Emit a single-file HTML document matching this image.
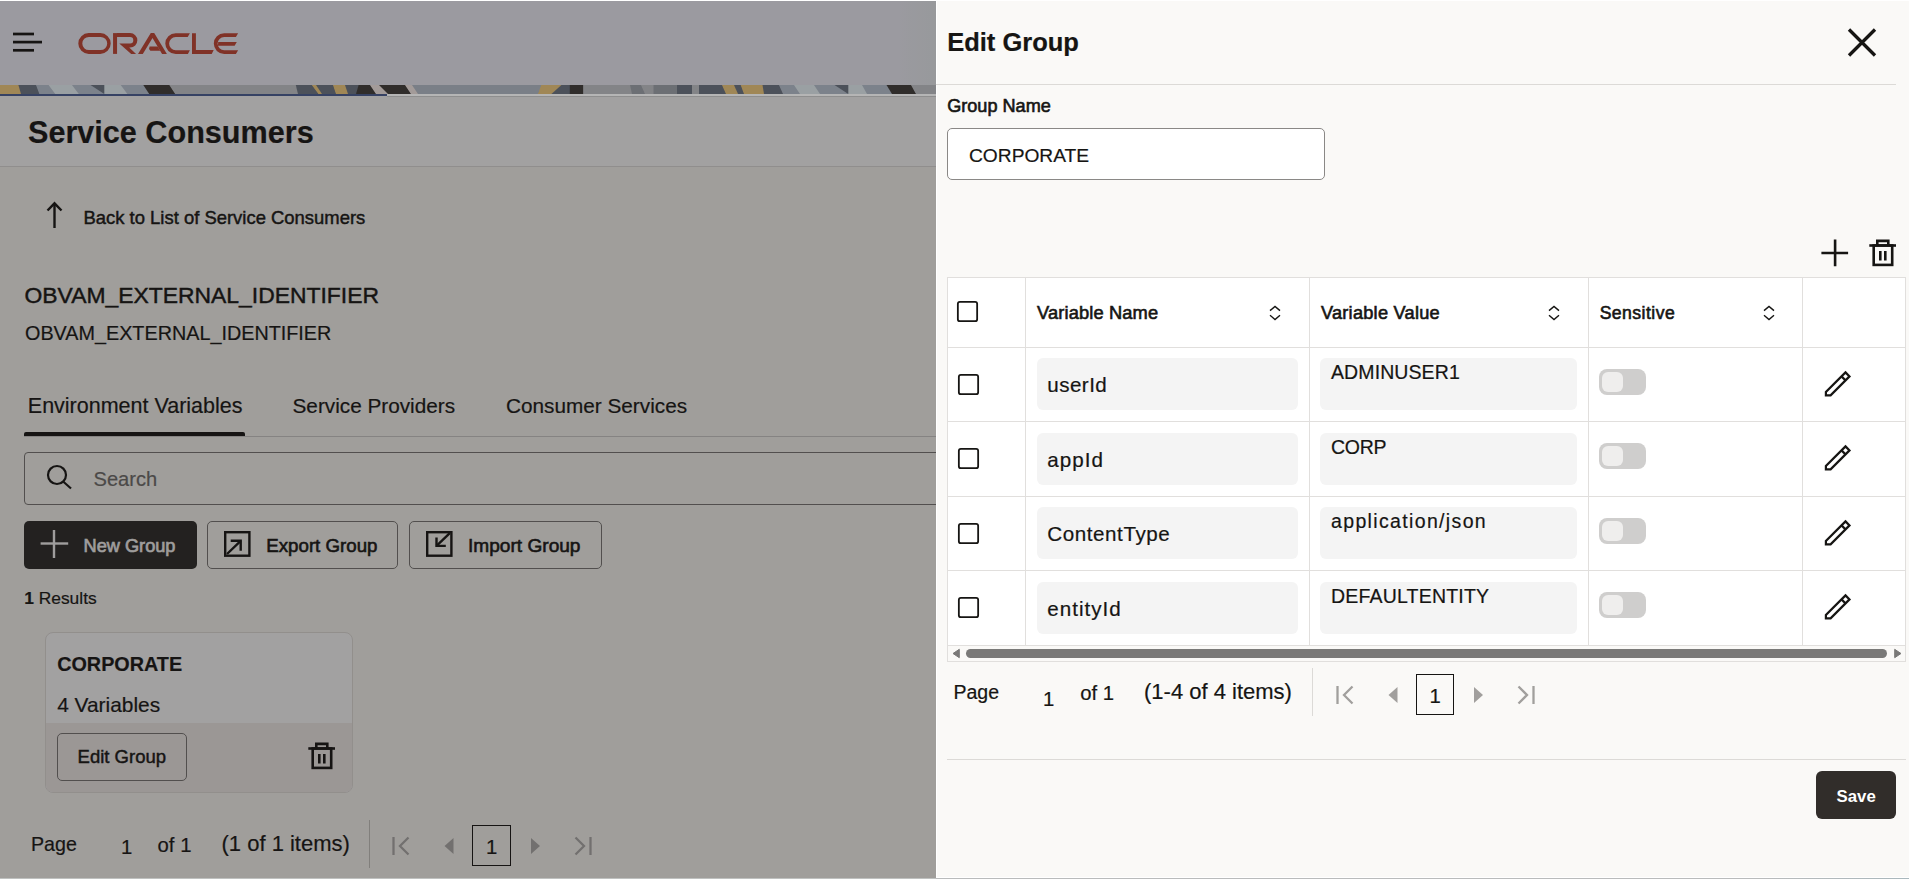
<!DOCTYPE html><html><head><meta charset="utf-8"><title>Edit Group</title><style>
*{margin:0;padding:0;box-sizing:border-box}
html,body{width:1909px;height:879px;overflow:hidden;background:#fff}
body{position:relative;font-family:"Liberation Sans",sans-serif;color:#161513}
.t{position:absolute;line-height:1;white-space:nowrap;-webkit-text-stroke:0.2px currentColor}
.r{position:absolute}
svg{position:absolute;overflow:visible}
.med{-webkit-text-stroke:0.45px currentColor}
.semi{-webkit-text-stroke:0.6px currentColor}
</style></head><body>
<div class="r" id="page" style="left:0;top:1px;width:936px;height:877px;background:#fcfbf6;overflow:hidden">
<div class="r" style="left:0px;top:0px;width:936px;height:84px;background:linear-gradient(to right,#f3f3fd 0%,#f3f3fd 96%,#eef2f6 100%)"></div>
<svg style="left:0;top:-1px" width="60" height="70"><g stroke="#161513" stroke-width="2.7" stroke-linecap="butt"><line x1="13" y1="34" x2="34" y2="34"/><line x1="13" y1="42.1" x2="42" y2="42.1"/><line x1="13" y1="50.3" x2="34" y2="50.3"/></g></svg>
<svg style="left:0;top:-1px" width="250" height="60" viewBox="0 0 250 60"><g fill="#c74634" fill-rule="evenodd">
<path d="M88.7 33.1H100.3A10.4 10.4 0 0 1 100.3 53.9H88.7A10.4 10.4 0 0 1 88.7 33.1ZM88.9 36.9H100.6A6.6 6.6 0 0 1 100.6 50.1H88.9A6.6 6.6 0 0 1 88.9 36.9Z"/>
<path d="M113.05 33.1H117.05V53.9H113.05Z"/>
<path d="M117 33.1H130.1A7.25 7.25 0 0 1 130.1 47.6H129.2L136.1 53.9H131.2L119.3 43.4H130.1A3.2 3.2 0 0 0 130.1 37.0H117Z"/>
<path d="M138 53.9L150.8 33.1H154.2L166.9 53.9H162.1L152.5 37.9L142.8 53.9Z"/>
<path d="M149.6 46.6H157.7L160.2 50.7H150.4Q148.2 48.6 149.6 46.6Z"/>
<path d="M175.7 33.2H189.9L187.7 37.0H175.7A6.6 6.6 0 0 0 175.7 50.2H189.9L187.9 54H175.7A10.4 10.4 0 0 1 175.7 33.2Z"/>
<path d="M192 33.2H195.9V50.1H213.7L211.7 54H192Z"/>
<path d="M224.2 33.2H238.1L235.9 37.0H224.2A6.6 6.6 0 0 0 224.2 50.2H238.1L235.9 54H224.2A10.4 10.4 0 0 1 224.2 33.2Z"/>
<path d="M218.2 42H236.8L234.6 45.8H217.9Z"/>
</g></svg>
<div class="r" style="left:0px;top:95px;width:936px;height:70px;background:#ffffff"></div>
<div class="r" style="left:0px;top:165px;width:936px;height:1px;background:#e2e0de"></div>
<div class="t" style="left:28px;top:116.10px;font-size:30.6px;font-weight:700;color:#161513;">Service Consumers</div>
<svg style="left:40px;top:194.3px" width="30" height="40"><g fill="none" stroke="#161513" stroke-width="2.4"><path d="M14.5 8.5V33"/><path d="M7.5 15.5L14.5 8.3L21.5 15.5"/></g></svg>
<div class="t med" style="left:83.5px;top:207.78px;font-size:18.45px;color:#161513;">Back to List of Service Consumers</div>
<div class="t med" style="left:24.5px;top:282.52px;font-size:22.9px;color:#161513;">OBVAM_EXTERNAL_IDENTIFIER</div>
<div class="t" style="left:25px;top:323.44px;font-size:19.8px;color:#161513;">OBVAM_EXTERNAL_IDENTIFIER</div>
<div class="t" style="left:27.8px;top:394.60px;font-size:21.5px;color:#161513;">Environment Variables</div>
<div class="t" style="left:292.5px;top:395.24px;font-size:20.75px;color:#161513;">Service Providers</div>
<div class="t" style="left:506px;top:395.24px;font-size:20.75px;color:#161513;">Consumer Services</div>
<div class="r" style="left:24px;top:435px;width:912px;height:1px;background:#cfcdcb"></div>
<div class="r" style="left:24px;top:431px;width:221px;height:4px;background:#161513;border-radius:2px 2px 0 0"></div>
<div class="r" style="left:24px;top:451px;width:1000px;height:53px;border:1px solid #7a7775;border-radius:4px;background:#fcfbf6"></div>
<svg style="left:40px;top:459px" width="40" height="40"><g fill="none" stroke="#161513" stroke-width="2.2"><circle cx="17" cy="15" r="9"/><path d="M23.4 21.7L31 28.5"/></g></svg>
<div class="t" style="left:93.5px;top:467.99px;font-size:20.1px;color:#6f6d6b;">Search</div>
<div class="r" style="left:24px;top:520px;width:173px;height:48px;background:#2c2b29;border-radius:5px"></div>
<svg style="left:40px;top:528px" width="30" height="30"><g stroke="#fbf9f8" stroke-width="2.4"><path d="M14 1V29"/><path d="M0.6 14.5H28.2"/></g></svg>
<div class="t semi" style="left:83.5px;top:536.09px;font-size:18.2px;color:#fbf9f8;">New Group</div>
<div class="r" style="left:207px;top:520px;width:191px;height:48px;border:1px solid #7a7775;border-radius:5px"></div>
<svg style="left:222px;top:528px" width="32" height="32"><g fill="none" stroke="#161513" stroke-width="2.4"><rect x="3.2" y="3.2" width="24.2" height="23.5"/><path d="M5 25L18.7 11.8"/><path d="M8.7 11.8H18.7V21.7"/></g></svg>
<div class="t semi" style="left:266.3px;top:535.67px;font-size:18.7px;color:#161513;">Export Group</div>
<div class="r" style="left:409px;top:520px;width:193px;height:48px;border:1px solid #7a7775;border-radius:5px"></div>
<svg style="left:424px;top:528px" width="32" height="32"><g fill="none" stroke="#161513" stroke-width="2.4"><rect x="3.2" y="3.2" width="24.2" height="23.5"/><path d="M25.8 4.1L12.5 16.9"/><path d="M12.5 8.6V16.9H21.8"/></g></svg>
<div class="t semi" style="left:468px;top:535.33px;font-size:19.1px;color:#161513;">Import Group</div>
<div class="t" style="left:24.2px;top:589.47px;font-size:17.4px;color:#161513;"><b>1</b> Results</div>
<div class="r" style="left:45px;top:631px;width:308px;height:161px;border:1px solid #e4e1dd;border-radius:8px;background:#ffffff;overflow:hidden"></div>
<div class="r" style="left:46px;top:722px;width:306px;height:69px;background:#f3eeec;border-radius:0 0 7px 7px"></div>
<div class="t" style="left:57.2px;top:654.44px;font-size:19.8px;font-weight:700;color:#161513;">CORPORATE</div>
<div class="t" style="left:57.2px;top:693.51px;font-size:20.9px;color:#161513;">4 Variables</div>
<div class="r" style="left:57px;top:732px;width:130px;height:48px;border:1px solid #7a7775;border-radius:5px"></div>
<div class="t med" style="left:77.6px;top:746.74px;font-size:18.5px;color:#161513;">Edit Group</div>
<svg style="left:301.3px;top:735.3px" width="44" height="40"><g fill="none" stroke="#161513" stroke-width="2.6"><path d="M7.3 12.5H34"/><rect x="11.7" y="12.5" width="18.5" height="19.4"/><path d="M15.3 12.5V7.9H26.3V12.5"/><path d="M18.3 18V27.6M23.3 18V27.6"/></g></svg>
<div class="t" style="left:31px;top:834.17px;font-size:19.65px;color:#161513;">Page</div>
<div class="t" style="left:121px;top:836.12px;font-size:20.3px;color:#161513;">1</div>
<div class="t" style="left:157.6px;top:833.62px;font-size:20.3px;color:#161513;">of 1</div>
<div class="t" style="left:221.5px;top:832.18px;font-size:22.0px;color:#161513;">(1 of 1 items)</div>
<div class="r" style="left:369px;top:819px;width:1px;height:48px;background:#c9c6c2"></div>
<div class="r" style="left:472px;top:824px;width:39px;height:41px;border:1.4px solid #161513"></div>
<div class="t" style="left:486px;top:836.12px;font-size:20.3px;color:#161513;">1</div>
<svg style="left:391.5px;top:833px" width="22" height="24"><g fill="none" stroke="#b0aeac" stroke-width="2.3"><path d="M1.5 3V21"/><path d="M16.5 3.5L8 12L16.5 20.5"/></g></svg>
<svg style="left:444px;top:833px" width="14" height="24"><path d="M0.5 12L9.5 4V20Z" fill="#b0aeac"/></svg>
<svg style="left:530.5px;top:833px" width="14" height="24"><path d="M9 12L0 4V20Z" fill="#b0aeac"/></svg>
<svg style="left:574.5px;top:833px" width="22" height="24"><g fill="none" stroke="#b0aeac" stroke-width="2.3"><path d="M15.5 3V21"/><path d="M0.5 3.5L9 12L0.5 20.5"/></g></svg>
</div>
<div class="r" style="left:0px;top:1px;width:936px;height:877px;background:rgba(22,21,19,0.4)"></div>
<svg style="left:0;top:85px" width="936" height="9" viewBox="0 0 936 9"><polygon points="0,0 19.0,0 21.6,9 0,9" fill="#a08756"/><polygon points="18.4,0 36.6,0 40.0,9 21,9" fill="#4c515a"/><polygon points="36,0 49.2,0 55.9,9 39.4,9" fill="#7c828b"/><polygon points="48.6,0 72.6,0 79.39999999999999,9 55.3,9" fill="#9aa0a3"/><polygon points="72,0 104.6,0 104.6,9 78.8,9" fill="#7c828b"/><polygon points="104,0 121.3,0 128.0,9 104,9" fill="#9aa0a3"/><polygon points="120.7,0 143.9,0 149.79999999999998,9 127.4,9" fill="#7c828b"/><polygon points="143.3,0 169.9,0 175.79999999999998,9 149.2,9" fill="#302d2b"/><polygon points="169.3,0 296.40000000000003,0 298.6,9 175.2,9" fill="#838487"/><polygon points="295.8,0 312.40000000000003,0 319.1,9 298,9" fill="#4c515a"/><polygon points="311.8,0 316.6,0 322.6,9 318.5,9" fill="#a08756"/><polygon points="316,0 333.6,0 336.6,9 322,9" fill="#4c515a"/><polygon points="333,0 345.6,0 348.6,9 336,9" fill="#a08756"/><polygon points="345,0 359.20000000000005,0 356.6,9 348,9" fill="#4c515a"/><polygon points="358.6,0 370.6,0 376.6,9 356,9" fill="#302d2b"/><polygon points="370,0 379.6,0 388.6,9 376,9" fill="#a39b99"/><polygon points="379,0 405.6,0 411.6,9 388,9" fill="#302d2b"/><polygon points="405,0 412.6,0 418.6,9 411,9" fill="#a39b99"/><polygon points="412,0 541.9,0 538.6,9 418,9" fill="#7a7f87"/><polygon points="541.3,0 562.0,0 552.0,9 538,9" fill="#a08756"/><polygon points="561.4,0 570.4,0 570.4,9 551.4,9" fill="#4c515a"/><polygon points="569.8,0 583.8000000000001,0 583.8000000000001,9 569.8,9" fill="#302d2b"/><polygon points="583.2,0 630.6,0 632.6,9 583.2,9" fill="#838487"/><polygon points="630,0 641.6,0 645.6,9 632,9" fill="#6c6f74"/><polygon points="641,0 654.1,0 654.1,9 645,9" fill="#838487"/><polygon points="653.5,0 677.6,0 677.6,9 653.5,9" fill="#6c6f74"/><polygon points="677,0 692.6,0 692.6,9 677,9" fill="#4c515a"/><polygon points="692,0 699.6,0 699.6,9 692,9" fill="#838487"/><polygon points="699,0 722.6,0 726.6,9 699,9" fill="#4c515a"/><polygon points="722,0 734.6,0 738.6,9 726,9" fill="#a08756"/><polygon points="734,0 741.3000000000001,0 744.6,9 738,9" fill="#4c515a"/><polygon points="740.7,0 763.1,0 764.6,9 744,9" fill="#a08756"/><polygon points="762.5,0 779.6,0 783.6,9 764,9" fill="#4c515a"/><polygon points="779,0 794.6,0 800.6,9 783,9" fill="#7c828b"/><polygon points="794,0 814.6,0 820.6,9 800,9" fill="#9aa0a3"/><polygon points="814,0 848.6,0 848.6,9 820,9" fill="#7c828b"/><polygon points="848,0 862.6,0 867.6,9 848,9" fill="#9aa0a3"/><polygon points="862,0 887.1,0 892.6,9 867,9" fill="#7c828b"/><polygon points="886.5,0 911.6,0 916.6,9 892,9" fill="#302d2b"/><polygon points="911,0 936.6,0 936.6,9 916,9" fill="#838487"/><polygon points="90.5,0 104.3,0 104.3,9" fill="#4c515a"/><polygon points="834.5,0 848.3,0 848.3,9" fill="#4c515a"/></svg>
<div class="r" style="left:0px;top:94px;width:387px;height:2px;background:#364264"></div>
<div class="r" style="left:387px;top:94px;width:549px;height:2px;background:#b5b5b5"></div>
<div class="r" style="left:387px;top:96px;width:549px;height:1px;background:#8e8e8e"></div>
<div class="r" style="left:936px;top:1px;width:973px;height:876px;background:#faf9f7;border-left:1px solid #fff"></div>
<div class="t" style="left:947.2px;top:30.11px;font-size:25.5px;font-weight:700;color:#161513;">Edit Group</div>
<svg style="left:1840px;top:20px" width="44" height="44"><g stroke="#161513" stroke-width="3.3"><path d="M9 9.5L35 35.5M35 9.5L9 35.5"/></g></svg>
<div class="r" style="left:936px;top:84px;width:960px;height:1px;background:#dcdad7"></div>
<div class="t semi" style="left:947.2px;top:96.68px;font-size:18.1px;color:#161513;">Group Name</div>
<div class="r" style="left:947px;top:128px;width:378px;height:52px;background:#fff;border:1px solid #8a8886;border-radius:5px"></div>
<div class="t" style="left:969px;top:146.05px;font-size:19.2px;color:#161513;">CORPORATE</div>
<svg style="left:1815px;top:233px" width="40" height="40"><g stroke="#161513" stroke-width="2.6"><path d="M20.1 6.6V33.2M6.4 20H33.1"/></g></svg>
<svg style="left:1862px;top:233px" width="44" height="40"><g fill="none" stroke="#161513" stroke-width="2.6"><path d="M7.3 12.5H34"/><rect x="11.7" y="12.5" width="18.5" height="19.4"/><path d="M15.3 12.5V7.9H26.3V12.5"/><path d="M18.3 18V27.6M23.3 18V27.6"/></g></svg>
<div class="r" style="left:947px;top:277px;width:959px;height:385px;background:#fff;border:1px solid #e1dfdd"></div>
<div class="r" style="left:948px;top:646px;width:957px;height:15px;background:#faf9f7"></div>
<div class="r" style="left:1025px;top:278px;width:1px;height:367px;background:#e1dfdd"></div>
<div class="r" style="left:1309px;top:278px;width:1px;height:367px;background:#e1dfdd"></div>
<div class="r" style="left:1588px;top:278px;width:1px;height:367px;background:#e1dfdd"></div>
<div class="r" style="left:1802px;top:278px;width:1px;height:367px;background:#e1dfdd"></div>
<div class="r" style="left:947px;top:347px;width:959px;height:1px;background:#e1dfdd"></div>
<div class="r" style="left:947px;top:421px;width:959px;height:1px;background:#e1dfdd"></div>
<div class="r" style="left:947px;top:496px;width:959px;height:1px;background:#e1dfdd"></div>
<div class="r" style="left:947px;top:570px;width:959px;height:1px;background:#e1dfdd"></div>
<div class="r" style="left:947px;top:645px;width:959px;height:1px;background:#e1dfdd"></div>
<svg style="left:950px;top:294px" width="35" height="35"><rect x="7.85" y="7.85" width="19.3" height="19.3" rx="2" fill="none" stroke="#161513" stroke-width="1.8"/></svg>
<div class="t semi" style="left:1037.1px;top:303.51px;font-size:18.3px;color:#161513;letter-spacing:0.12px;">Variable Name</div>
<div class="t semi" style="left:1320.9px;top:303.59px;font-size:18.2px;color:#161513;letter-spacing:0.25px;">Variable Value</div>
<div class="t semi" style="left:1599.7px;top:304.60px;font-size:17.6px;color:#161513;letter-spacing:0.45px;">Sensitive</div>
<svg style="left:1268.5px;top:304px" width="14" height="18"><g fill="none" stroke="#161513" stroke-width="1.4"><path d="M1 6.6L6 2.4L11 6.6M1 11.2L6 15.5L11 11.2"/></g></svg>
<svg style="left:1547.5px;top:304px" width="14" height="18"><g fill="none" stroke="#161513" stroke-width="1.4"><path d="M1 6.6L6 2.4L11 6.6M1 11.2L6 15.5L11 11.2"/></g></svg>
<svg style="left:1762.5px;top:304px" width="14" height="18"><g fill="none" stroke="#161513" stroke-width="1.4"><path d="M1 6.6L6 2.4L11 6.6M1 11.2L6 15.5L11 11.2"/></g></svg>
<svg style="left:951px;top:366.5px" width="35" height="35"><rect x="7.85" y="7.85" width="19.3" height="19.3" rx="2" fill="none" stroke="#161513" stroke-width="1.8"/></svg>
<div class="r" style="left:1037px;top:358px;width:261px;height:52px;background:#f4f4f4;border-radius:6px"></div>
<div class="t" style="left:1047.3px;top:375.36px;font-size:20.6px;color:#161513;letter-spacing:0.45px;">userId</div>
<div class="r" style="left:1320px;top:358px;width:257px;height:52px;background:#f4f4f4;border-radius:6px"></div>
<div class="t" style="left:1331px;top:362.69px;font-size:19.5px;color:#161513;letter-spacing:0.1px;">ADMINUSER1</div>
<div class="r" style="left:1599px;top:369px;width:47px;height:25.5px;background:#cfcecd;border-radius:8px"></div>
<div class="r" style="left:1602px;top:372px;width:21px;height:19.5px;background:#efeeed;border-radius:6px"></div>
<svg style="left:1815px;top:365px" width="40" height="40"><g fill="none" stroke="#161513" stroke-width="2.2" stroke-linejoin="miter"><path d="M30.5 7.4L34.5 11.4L15.6 30.3H10.9V27Z"/><path d="M26.5 11.4L30.5 15.4"/></g></svg>
<svg style="left:951px;top:440.5px" width="35" height="35"><rect x="7.85" y="7.85" width="19.3" height="19.3" rx="2" fill="none" stroke="#161513" stroke-width="1.8"/></svg>
<div class="r" style="left:1037px;top:433px;width:261px;height:52px;background:#f4f4f4;border-radius:6px"></div>
<div class="t" style="left:1047.3px;top:450.36px;font-size:20.6px;color:#161513;letter-spacing:1.0px;">appId</div>
<div class="r" style="left:1320px;top:433px;width:257px;height:52px;background:#f4f4f4;border-radius:6px"></div>
<div class="t" style="left:1331px;top:437.69px;font-size:19.5px;color:#161513;letter-spacing:-0.3px;">CORP</div>
<div class="r" style="left:1599px;top:443px;width:47px;height:25.5px;background:#cfcecd;border-radius:8px"></div>
<div class="r" style="left:1602px;top:446px;width:21px;height:19.5px;background:#efeeed;border-radius:6px"></div>
<svg style="left:1815px;top:439px" width="40" height="40"><g fill="none" stroke="#161513" stroke-width="2.2" stroke-linejoin="miter"><path d="M30.5 7.4L34.5 11.4L15.6 30.3H10.9V27Z"/><path d="M26.5 11.4L30.5 15.4"/></g></svg>
<svg style="left:951px;top:515.5px" width="35" height="35"><rect x="7.85" y="7.85" width="19.3" height="19.3" rx="2" fill="none" stroke="#161513" stroke-width="1.8"/></svg>
<div class="r" style="left:1037px;top:507px;width:261px;height:52px;background:#f4f4f4;border-radius:6px"></div>
<div class="t" style="left:1047.3px;top:524.36px;font-size:20.6px;color:#161513;letter-spacing:0.57px;">ContentType</div>
<div class="r" style="left:1320px;top:507px;width:257px;height:52px;background:#f4f4f4;border-radius:6px"></div>
<div class="t" style="left:1331px;top:511.69px;font-size:19.5px;color:#161513;letter-spacing:1.35px;">application/json</div>
<div class="r" style="left:1599px;top:518px;width:47px;height:25.5px;background:#cfcecd;border-radius:8px"></div>
<div class="r" style="left:1602px;top:521px;width:21px;height:19.5px;background:#efeeed;border-radius:6px"></div>
<svg style="left:1815px;top:514px" width="40" height="40"><g fill="none" stroke="#161513" stroke-width="2.2" stroke-linejoin="miter"><path d="M30.5 7.4L34.5 11.4L15.6 30.3H10.9V27Z"/><path d="M26.5 11.4L30.5 15.4"/></g></svg>
<svg style="left:951px;top:589.5px" width="35" height="35"><rect x="7.85" y="7.85" width="19.3" height="19.3" rx="2" fill="none" stroke="#161513" stroke-width="1.8"/></svg>
<div class="r" style="left:1037px;top:582px;width:261px;height:52px;background:#f4f4f4;border-radius:6px"></div>
<div class="t" style="left:1047.3px;top:599.36px;font-size:20.6px;color:#161513;letter-spacing:1.0px;">entityId</div>
<div class="r" style="left:1320px;top:582px;width:257px;height:52px;background:#f4f4f4;border-radius:6px"></div>
<div class="t" style="left:1331px;top:586.69px;font-size:19.5px;color:#161513;letter-spacing:0.2px;">DEFAULTENTITY</div>
<div class="r" style="left:1599px;top:592px;width:47px;height:25.5px;background:#cfcecd;border-radius:8px"></div>
<div class="r" style="left:1602px;top:595px;width:21px;height:19.5px;background:#efeeed;border-radius:6px"></div>
<svg style="left:1815px;top:588px" width="40" height="40"><g fill="none" stroke="#161513" stroke-width="2.2" stroke-linejoin="miter"><path d="M30.5 7.4L34.5 11.4L15.6 30.3H10.9V27Z"/><path d="M26.5 11.4L30.5 15.4"/></g></svg>
<div class="r" style="left:966px;top:649px;width:921px;height:9px;background:#7a7978;border-radius:5px"></div>
<svg style="left:950px;top:647px" width="14" height="14"><path d="M3 6.5L9.3 2.3V10.7Z" fill="#7a7978" stroke="#7a7978" stroke-width="1" stroke-linejoin="round"/></svg>
<svg style="left:1890px;top:647px" width="14" height="14"><path d="M11 6.5L4.7 2.3V10.7Z" fill="#7a7978" stroke="#7a7978" stroke-width="1" stroke-linejoin="round"/></svg>
<div class="t" style="left:953.5px;top:683.19px;font-size:19.5px;color:#161513;">Page</div>
<div class="t" style="left:1043px;top:689.42px;font-size:20.3px;color:#161513;">1</div>
<div class="t" style="left:1080.2px;top:682.52px;font-size:20.3px;color:#161513;">of 1</div>
<div class="t" style="left:1144px;top:681.08px;font-size:22.0px;color:#161513;">(1-4 of 4 items)</div>
<div class="r" style="left:1312px;top:668px;width:1px;height:48px;background:#dcdad7"></div>
<div class="r" style="left:1416px;top:674px;width:38px;height:41px;border:1.4px solid #161513"></div>
<div class="t" style="left:1429.5px;top:686.32px;font-size:20.3px;color:#161513;">1</div>
<svg style="left:1335.5px;top:683px" width="22" height="24"><g fill="none" stroke="#a19f9d" stroke-width="2.3"><path d="M1.5 3V21"/><path d="M16.5 3.5L8 12L16.5 20.5"/></g></svg>
<svg style="left:1387.5px;top:683px" width="14" height="24"><path d="M0.5 12L9.5 4V20Z" fill="#a19f9d"/></svg>
<svg style="left:1474px;top:683px" width="14" height="24"><path d="M9 12L0 4V20Z" fill="#a19f9d"/></svg>
<svg style="left:1518px;top:683px" width="22" height="24"><g fill="none" stroke="#a19f9d" stroke-width="2.3"><path d="M15.5 3V21"/><path d="M0.5 3.5L9 12L0.5 20.5"/></g></svg>
<div class="r" style="left:947px;top:759px;width:959px;height:1px;background:#dcdad7"></div>
<div class="r" style="left:1816px;top:771px;width:80px;height:48px;background:#312d2a;border-radius:6px"></div>
<div class="t" style="left:1836.6px;top:788.58px;font-size:16.8px;font-weight:700;color:#ffffff;-webkit-text-stroke:0;">Save</div>
<div class="r" style="left:0px;top:878px;width:936px;height:1px;background:#bfc1c0"></div>
<div class="r" style="left:936px;top:878px;width:973px;height:1px;background:linear-gradient(to right,#b9bbbc 0%,#b9bbbc 85%,#a9b7bc 100%)"></div>
</body></html>
